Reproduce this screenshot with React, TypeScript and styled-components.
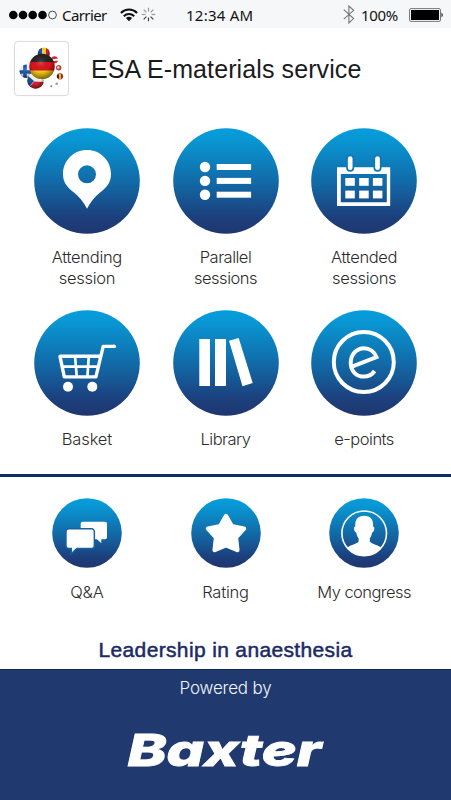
import React from "react";
import styled, { createGlobalStyle } from "styled-components";

const GlobalStyle = createGlobalStyle`
  * { box-sizing: border-box; }
  body { margin: 0; background: #fff; }
  svg { display: block; flex: none; }
`;

const Screen = styled.main`
  width: 451px;
  height: 800px;
  overflow: hidden;
  display: flex;
  flex-direction: column;
  background: #fff;
  font-family: "Inter", "Liberation Sans", sans-serif;
`;

const StatusBar = styled.header`
  height: 28px;
  flex: none;
  display: grid;
  grid-template-columns: 177px auto 1fr;
  align-items: center;
  padding: 1px 7px 0 9px;
  background: #f6f7f9;
  color: #111;
  font: 400 15px/20px "Noto Sans", sans-serif;
`;

const StatusGroup = styled.div<{ $end?: boolean }>`
  display: flex;
  align-items: center;
  justify-content: ${(p) => (p.$end ? "flex-end" : "flex-start")};
`;

const StatusText = styled.span<{ $spacing?: number; $left?: number; $right?: number }>`
  white-space: nowrap;
  letter-spacing: ${(p) => p.$spacing ?? 0}px;
  margin-left: ${(p) => p.$left ?? 0}px;
  margin-right: ${(p) => p.$right ?? 0}px;
`;

const TitleBar = styled.section`
  height: 100px;
  flex: none;
  display: flex;
  align-items: flex-start;
  gap: 22px;
  padding: 13px 14px 0;
`;

const AppIcon = styled.div`
  width: 55px;
  height: 55px;
  border: 1px solid #dcdcdc;
  border-radius: 4px;
  box-shadow: 0 0 1px #ddd;
`;

const Title = styled.h1`
  margin: 13px 0 0;
  font: 400 25px/30px "Liberation Sans", sans-serif;
  letter-spacing: 0.1px;
  color: #1b1b1d;
  white-space: nowrap;
`;

const MenuGrid = styled.nav<{ $pitch: number; $height: number; $top?: number }>`
  flex: none;
  height: ${(p) => p.$height}px;
  display: grid;
  grid-template-columns: repeat(3, 138.6px);
  grid-auto-rows: ${(p) => p.$pitch}px;
  justify-content: center;
  padding-top: ${(p) => p.$top ?? 0}px;
`;

const MenuItem = styled.a<{ $gap: number }>`
  display: flex;
  flex-direction: column;
  align-items: center;
  gap: ${(p) => p.$gap}px;
  color: #2c2c2e;
`;

const Label = styled.span<{ $spacing: number }>`
  font-size: 16.5px;
  font-weight: 300;
  line-height: 21px;
  text-align: center;
  white-space: pre-line;
  letter-spacing: ${(p) => p.$spacing}px;
`;

const Divider = styled.hr`
  flex: none;
  width: 100%;
  height: 3px;
  margin: 0;
  border: 0;
  background: #0f2c66;
`;

const Slogan = styled.p`
  flex: 1;
  margin: 0;
  padding-top: 33px;
  text-align: center;
  font: 400 21px/26px "Liberation Sans", sans-serif;
  letter-spacing: 0.35px;
  -webkit-text-stroke: 0.5px #1b2a66;
  color: #1b2a66;
`;

const Footer = styled.footer`
  height: 131px;
  flex: none;
  display: flex;
  flex-direction: column;
  align-items: center;
  padding-top: 8px;
  background: #20396f;
  border-top: 1px solid #15295a;
  color: #f2f5fb;
`;

const Powered = styled.span`
  font-size: 17px;
  font-weight: 300;
  line-height: 21px;
  letter-spacing: -0.2px;
`;

const BrandSlot = styled.div`
  margin-top: 20px;
`;

const Disc = ({ id, size, children }: { id: string; size: number; children: React.ReactNode }) => (
  <svg width={size} height={size} viewBox={`0 0 ${size} ${size}`}>
    <defs>
      <linearGradient id={id} x1="0" y1="0" x2="0" y2="1">
        <stop offset="0" stopColor="#069ddb" />
        <stop offset="0.1" stopColor="#0898d5" />
        <stop offset="0.5" stopColor="#116ba8" />
        <stop offset="0.85" stopColor="#1c3f7c" />
        <stop offset="1" stopColor="#20366f" />
      </linearGradient>
    </defs>
    <circle cx={size / 2} cy={size / 2} r={size / 2 - 0.2} fill={`url(#${id})`} />
    {children}
  </svg>
);

const PinIcon = () => (
  <path
    fill="#fff"
    fillRule="evenodd"
    d="M53 22C39.500 22 29 32.500 29 46C29 55 33.500 59.500 40 64.500C45.500 69 49.500 74 53 80.700C56.500 74 60.500 69 66 64.500C72.500 59.500 77 55 77 46C77 32.500 66.500 22 53 22ZM53 37.300A9 9 0 1 1 53 55.300A9 9 0 1 1 53 37.300Z"
  />
);

const ListIcon = () => (
  <g fill="#fff">
    {[39, 52.900, 66.700].map((y) => (
      <React.Fragment key={y}>
        <circle cx="32" cy={y} r="5.200" />
        <rect x="43.700" y={y - 3} width="34.400" height="6" />
      </React.Fragment>
    ))}
  </g>
);

const CalendarIcon = () => (
  <g>
    <path d="M26 39.300H79.200V78H26ZM29.800 46V74.300H75.800V46Z" fill="#fff" fillRule="evenodd" />
    {[50, 62.600].map((y) =>
      [34.300, 48.200, 61.900].map((x) => (
        <rect key={`${x}-${y}`} x={x} y={y} width="9.500" height="7.800" fill="#fff" />
      )),
    )}
    {[39.200, 66.500].map((x) => (
      <rect key={x} x={x - 3.200} y="27.300" width="6.400" height="15.600" rx="3.200" fill="#fff" stroke="#1278b3" strokeWidth="1.700" />
    ))}
  </g>
);

const CartIcon = () => (
  <g fill="none" stroke="#fff" strokeWidth="2.700" strokeLinejoin="round">
    <path d="M80.500 36.400H69.200L61.900 66.900H30.300L26 46.300H66.500" strokeWidth="3.400" />
    <path d="M79 36.400H80.500" strokeWidth="3.400" strokeLinecap="round" />
    <path d="M28 56.700H64M41 46L42.800 67M54.800 46L53.400 67" />
    <g fill="#fff" stroke="none">
      <circle cx="34" cy="76.700" r="5" />
      <circle cx="58.300" cy="76.700" r="5" />
    </g>
  </g>
);

const BooksIcon = () => (
  <path fill="#fff" d="M26.300 29H37V76H26.300ZM42 29H53V76H42ZM56 30.800L65.700 28L79.700 73L69.500 76.200Z" />
);

const EIcon = () => (
  <g fill="none" stroke="#fff">
    <circle cx="52.800" cy="52" r="30" strokeWidth="4" />
    <path
      strokeWidth="4"
      d="M41 56.600L65.500 47.200C63.500 41.500 58.500 38.200 53 38.200C45.500 38.200 39.700 44.600 39.700 52.800C39.700 61 45.300 66.600 53 66.600C57.500 66.600 61 64.800 63.600 61"
    />
  </g>
);

const ChatIcon = () => (
  <g fill="#fff">
    <path d="M30.700 23.800H53A2 2 0 0 1 55 25.800V39.300A2 2 0 0 1 53 41.300H49.300V45.300L45 41.300H30.700A2 2 0 0 1 28.700 39.300V25.800A2 2 0 0 1 30.700 23.800Z" />
    <path
      d="M16.700 31.600H39.600A2 2 0 0 1 41.600 33.600V47.700A2 2 0 0 1 39.600 49.700H24.500L20 54V49.700H16.700A2 2 0 0 1 14.700 47.700V33.600A2 2 0 0 1 16.700 31.600Z"
      stroke="#1463a0"
      strokeWidth="3"
      paintOrder="stroke"
    />
  </g>
);

const StarIcon = () => (
  <path
    fill="#fff"
    stroke="#fff"
    strokeWidth="4.500"
    strokeLinejoin="round"
    d="M35 18.200L40.700 28.200L53 30.600L44.900 39.500L46.300 52L35 47.200L23.700 52L25.100 39.500L17 30.600L29.300 28.200Z"
  />
);

const PersonIcon = () => (
  <g>
    <circle cx="35.200" cy="35.300" r="22.300" fill="none" stroke="#fff" strokeWidth="1.600" />
    <path
      fill="#fff"
      d="M35.200 17.800C29 17.800 25.800 21.500 26.300 28.500C24.300 28.500 24.800 33.500 27.200 34.500C27.800 37.500 28.800 39.500 29.600 40.500V43.500C27.500 46.500 20.500 47 18.500 49.500C22.500 55.500 28.500 58 35.200 58C41.900 58 47.900 55.500 51.900 49.500C49.900 47 42.900 46.500 40.800 43.500V40.500C41.600 39.500 42.600 37.500 43.200 34.500C45.600 33.500 46.100 28.500 44.100 28.500C44.600 21.500 41.400 17.800 35.200 17.800Z"
    />
  </g>
);

const FlagBalls = () => (
  <svg width="53" height="53" viewBox="1 1 53 53">
    <defs>
      <radialGradient id="shade" cx="0.45" cy="0.35" r="0.65">
        <stop offset="0" stopColor="#fff" stopOpacity="0.2" />
        <stop offset="0.55" stopColor="#000" stopOpacity="0" />
        <stop offset="1" stopColor="#000" stopOpacity="0.5" />
      </radialGradient>
      <clipPath id="de"><circle cx="28" cy="25.400" r="12.700" /></clipPath>
      <clipPath id="fi"><circle cx="12.300" cy="30.300" r="6.700" /></clipPath>
      <clipPath id="cz"><circle cx="21.500" cy="39.500" r="8.300" /></clipPath>
      <clipPath id="ro"><circle cx="29.800" cy="12.600" r="6" /></clipPath>
    </defs>
    <g clipPath="url(#ro)">
      <rect x="23" y="6" width="5" height="13" fill="#1f46a0" />
      <rect x="28" y="6" width="4" height="13" fill="#f5d21d" />
      <rect x="32" y="6" width="5" height="13" fill="#c8202b" />
    </g>
    <circle cx="29.800" cy="12.600" r="6" fill="url(#shade)" />
    <g clipPath="url(#fi)">
      <rect x="5" y="23" width="15" height="15" fill="#f4f6fb" />
      <path d="M5 31H20M11 23V38" stroke="#1b57a8" strokeWidth="3.600" />
    </g>
    <circle cx="12.300" cy="30.300" r="6.700" fill="url(#shade)" />
    <g clipPath="url(#cz)">
      <rect x="12" y="30" width="19" height="12" fill="#f7f7f7" />
      <path d="M14 48L20 40.500L31 41V49H12Z" fill="#d3222e" />
      <path d="M12 33L20 40L15 46L12 45Z" fill="#214c97" />
    </g>
    <circle cx="21.500" cy="39.500" r="8.300" fill="url(#shade)" />
    <circle cx="40.500" cy="18.800" r="3.500" fill="#c92d35" />
    <path d="M37.500 19.500L44 18.500" stroke="#fff" strokeWidth="1.800" />
    <circle cx="44.700" cy="26.700" r="2.700" fill="#b8453d" />
    <circle cx="44.300" cy="26.500" r="1.200" fill="#edd9d2" />
    <circle cx="46" cy="35.300" r="3.100" fill="#a12c24" />
    <path d="M46 33V38" stroke="#e8b534" strokeWidth="2" />
    <path d="M43.700 34V37" stroke="#242021" strokeWidth="1.500" />
    <circle cx="42.700" cy="42.700" r="1.300" fill="#c58b92" />
    <circle cx="37.300" cy="45.200" r="1" fill="#777" />
    <g clipPath="url(#de)">
      <rect x="15" y="12" width="26" height="10" fill="#242424" />
      <rect x="15" y="21" width="26" height="9" fill="#d9141c" />
      <rect x="15" y="29.500" width="26" height="10" fill="#f8cc18" />
    </g>
    <circle cx="28" cy="25.400" r="12.700" fill="url(#shade)" />
  </svg>
);

const SignalDots = () => (
  <svg width="48" height="12" viewBox="0 0 48 12">
    {[4.300, 14, 23.700, 33.500].map((x) => (
      <circle key={x} cx={x} cy="6" r="4.300" fill="#050505" />
    ))}
    <circle cx="43.500" cy="6" r="3.900" fill="none" stroke="#222" strokeWidth="0.800" />
  </svg>
);

const WifiIcon = () => (
  <svg width="18" height="14" viewBox="0 0 18 14">
    <g fill="none" stroke="#111" strokeWidth="2.100">
      <path d="M0.900 4.900C5.500 0.300 12.500 0.300 17.100 4.900" />
      <path d="M3.800 8.200C6.800 5.300 11.200 5.300 14.200 8.200" />
    </g>
    <path d="M5.900 10C7.800 8.400 10.200 8.400 12.100 10L9 13.300Z" fill="#111" />
  </svg>
);

const SpinnerSvg = styled.svg`
  margin-left: 3px;
`;

const Spinner = () => (
  <SpinnerSvg width="15" height="15" viewBox="-7.500 -7.500 15 15">
    {[0, 45, 90, 135, 180, 225, 270, 315].map((a, i) => (
      <path key={a} d="M0 -3V-6.800" transform={`rotate(${a})`} stroke={i > 2 && i < 6 ? "#444" : "#999"} strokeWidth="1.200" />
    ))}
  </SpinnerSvg>
);

const BluetoothIcon = () => (
  <svg width="12" height="19" viewBox="0 0 12 19">
    <path d="M0.800 4.700L10.600 13.600L5.900 18V1L10.600 5.300L0.800 14.200" fill="none" stroke="#777" strokeWidth="1.100" />
  </svg>
);

const BatteryIcon = () => (
  <svg width="35" height="14" viewBox="0 0 35 14">
    <rect x="0.500" y="0.600" width="31" height="12.800" rx="1.500" fill="none" stroke="#777" />
    <rect x="2" y="2" width="28" height="10" fill="#000" />
    <path d="M32.500 4.500Q35 7 32.500 9.500Z" fill="#111" />
  </svg>
);

const BaxterLogo = () => (
  <svg width="200" height="64" viewBox="0 0 200 64">
    <text
      x="1.500"
      y="46.500"
      textLength="194"
      lengthAdjust="spacingAndGlyphs"
      fill="#fff"
      stroke="#fff"
      strokeWidth="0.800"
      fontFamily="Inter, sans-serif"
      fontWeight="800"
      fontStyle="italic"
      fontSize="44.500"
    >
      Baxter
    </text>
  </svg>
);

const mainItems = [
  { id: "attending", label: "Attending\nsession", spacing: -0.3, icon: <PinIcon /> },
  { id: "parallel", label: "Parallel\nsessions", spacing: -0.5, icon: <ListIcon /> },
  { id: "attended", label: "Attended\nsessions", spacing: -0.35, icon: <CalendarIcon /> },
  { id: "basket", label: "Basket", spacing: -0.15, icon: <CartIcon /> },
  { id: "library", label: "Library", spacing: -0.5, icon: <BooksIcon /> },
  { id: "epoints", label: "e-points", spacing: -0.5, icon: <EIcon /> },
];

const extraItems = [
  { id: "qa", label: "Q&A", spacing: -0.2, icon: <ChatIcon /> },
  { id: "rating", label: "Rating", spacing: -0.2, icon: <StarIcon /> },
  { id: "congress", label: "My congress", spacing: -0.55, icon: <PersonIcon /> },
];

export default function App() {
  return (
    <Screen>
      <GlobalStyle />
      <StatusBar>
        <StatusGroup>
          <SignalDots />
          <StatusText $left={5} $right={13} $spacing={-0.6}>Carrier</StatusText>
          <WifiIcon />
          <Spinner />
        </StatusGroup>
        <StatusText $spacing={0.25}>12:34 AM</StatusText>
        <StatusGroup $end>
          <BluetoothIcon />
          <StatusText $left={6} $right={11} $spacing={-0.3}>100%</StatusText>
          <BatteryIcon />
        </StatusGroup>
      </StatusBar>
      <TitleBar>
        <AppIcon>
          <FlagBalls />
        </AppIcon>
        <Title>ESA E-materials service</Title>
      </TitleBar>
      <MenuGrid $pitch={182} $height={346}>
        {mainItems.map((item) => (
          <MenuItem key={item.id} $gap={13}>
            <Disc id={item.id} size={106}>{item.icon}</Disc>
            <Label $spacing={item.spacing}>{item.label}</Label>
          </MenuItem>
        ))}
      </MenuGrid>
      <Divider />
      <MenuGrid $pitch={110} $height={127} $top={21}>
        {extraItems.map((item) => (
          <MenuItem key={item.id} $gap={14}>
            <Disc id={item.id} size={70}>{item.icon}</Disc>
            <Label $spacing={item.spacing}>{item.label}</Label>
          </MenuItem>
        ))}
      </MenuGrid>
      <Slogan>Leadership in anaesthesia</Slogan>
      <Footer>
        <Powered>Powered by</Powered>
        <BrandSlot>
          <BaxterLogo />
        </BrandSlot>
      </Footer>
    </Screen>
  );
}
